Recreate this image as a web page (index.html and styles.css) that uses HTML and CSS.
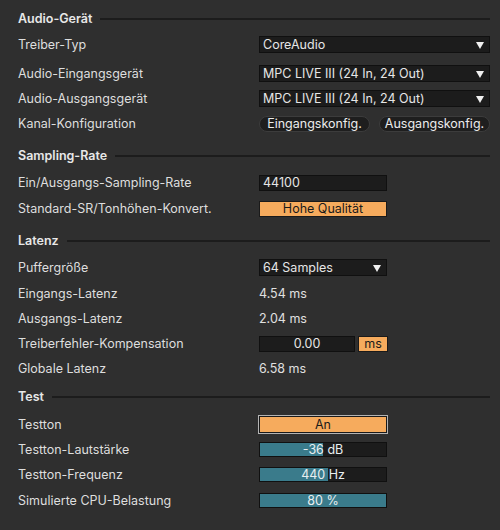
FILE: index.html
```html
<!DOCTYPE html>
<html lang="de">
<head>
<meta charset="utf-8">
<link rel="stylesheet" href="styles.css">
</head>
<body>
<div class="panel">
  <div class="hdr"><span>Audio-Gerät</span><i class="rule"></i></div>
  <div class="row m2"><span class="lbl">Treiber-Typ</span><div class="ctl"><div class="dd wide">CoreAudio<b class="arr"></b></div></div></div>
  <div class="row m4"><span class="lbl">Audio-Eingangsgerät</span><div class="ctl"><div class="dd wide">MPC LIVE III (24 In, 24 Out)<b class="arr"></b></div></div></div>
  <div class="row"><span class="lbl">Audio-Ausgangsgerät</span><div class="ctl"><div class="dd wide">MPC LIVE III (24 In, 24 Out)<b class="arr"></b></div></div></div>
  <div class="row"><span class="lbl">Kanal-Konfiguration</span><div class="ctl pills"><div class="pill">Eingangskonfig.</div><div class="pill">Ausgangskonfig.</div></div></div>

  <div class="hdr m7"><span>Sampling-Rate</span><i class="rule"></i></div>
  <div class="row m3"><span class="lbl">Ein/Ausgangs-Sampling-Rate</span><div class="ctl"><div class="field">44100</div></div></div>
  <div class="row m1"><span class="lbl">Standard-SR/Tonhöhen-Konvert.</span><div class="ctl"><div class="obtn">Hohe Qualität</div></div></div>

  <div class="hdr m7"><span>Latenz</span><i class="rule"></i></div>
  <div class="row m3"><span class="lbl">Puffergröße</span><div class="ctl"><div class="dd mid">64 Samples<b class="arr"></b></div></div></div>
  <div class="row m1"><span class="lbl">Eingangs-Latenz</span><div class="ctl"><span class="val">4.54 ms</span></div></div>
  <div class="row"><span class="lbl">Ausgangs-Latenz</span><div class="ctl"><span class="val">2.04 ms</span></div></div>
  <div class="row"><span class="lbl">Treiberfehler-Kompensation</span><div class="ctl combo"><div class="field num">0.00</div><div class="obtn ms">ms</div></div></div>
  <div class="row"><span class="lbl">Globale Latenz</span><div class="ctl"><span class="val">6.58 ms</span></div></div>

  <div class="hdr m3"><span>Test</span><i class="rule"></i></div>
  <div class="row m4"><span class="lbl">Testton</span><div class="ctl"><div class="obtn on">An</div></div></div>
  <div class="row"><span class="lbl">Testton-Lautstärke</span><div class="ctl"><div class="slider"><div class="fill" style="width:50%"></div><span class="stxt">-36 dB</span></div></div></div>
  <div class="row"><span class="lbl">Testton-Frequenz</span><div class="ctl"><div class="slider"><div class="fill" style="width:54%"></div><span class="stxt">440 Hz</span></div></div></div>
  <div class="row m1"><span class="lbl">Simulierte CPU-Belastung</span><div class="ctl"><div class="slider"><div class="fill" style="width:100%"></div><span class="stxt">80 %</span></div></div></div>
</div>
</body>
</html>
```
FILE: styles.css
```css
* { box-sizing: border-box; }
html, body { margin: 0; padding: 0; }
body {
  width: 500px;
  height: 530px;
  background: #2f2f2f;
  color: #dedede;
  font-family: Inter, "Noto Sans", sans-serif;
  font-size: 12.5px;
  overflow: hidden;
}
.panel { padding: 6px 10px 0 18px; }
.hdr {
  height: 24px;
  display: flex;
  align-items: center;
  gap: 8px;
  font-weight: 600;
  color: #e8e8e8;
}
.rule {
  flex: 1;
  height: 2px;
  background: #1c1c1c;
  margin-top: 1px;
}
.row {
  height: 25px;
  display: flex;
  align-items: center;
}
.m1 { margin-top: 1px; }
.m2 { margin-top: 2px; }
.m3 { margin-top: 3px; }
.m4 { margin-top: 4px; }
.m7 { margin-top: 7px; }
.lbl { width: 241px; flex: none; }
.ctl { display: flex; align-items: center; }
.dd {
  position: relative;
  height: 17px;
  background: #1c1c1c;
  border: 1px solid #101010;
  padding: 0 3px;
  line-height: 15px;
  color: #e6e6e6;
}
.dd.wide { width: 231px; }
.dd.mid { width: 128px; }
.arr {
  position: absolute;
  right: 5px;
  top: 5px;
  width: 0;
  height: 0;
  border-left: 4.5px solid transparent;
  border-right: 4.5px solid transparent;
  border-top: 7px solid #f0f0f0;
}
.pills { gap: 9px; }
.pill {
  width: 111px;
  height: 16px;
  border-radius: 8px;
  background: #1e1e1e;
  border: 1px solid #3c3c3c;
  text-align: center;
  line-height: 14px;
  color: #ececec;
}
.field {
  width: 128px;
  height: 16px;
  background: #1c1c1c;
  border: 1px solid #101010;
  padding: 0 3px;
  line-height: 14px;
  color: #e6e6e6;
}
.field.num { width: 96px; text-align: center; }
.combo { gap: 3px; }
.obtn {
  width: 128px;
  height: 16px;
  background: #f6ab5d;
  border: 1px solid #1a1a1a;
  text-align: center;
  line-height: 14px;
  color: #1a1a1a;
}
.obtn.ms { width: 30px; }
.obtn.on {
  height: 17px;
  line-height: 15px;
  outline: 1px solid #b4b4b4;
}
.val { color: #e0e0e0; }
.slider {
  position: relative;
  width: 128px;
  height: 15px;
  background: #1c1c1c;
  border: 1px solid #101010;
}
.fill {
  height: 100%;
  background: #3a7b8b;
}
.stxt {
  position: absolute;
  inset: 0;
  text-align: center;
  line-height: 13px;
  color: #e8eef0;
}
```
